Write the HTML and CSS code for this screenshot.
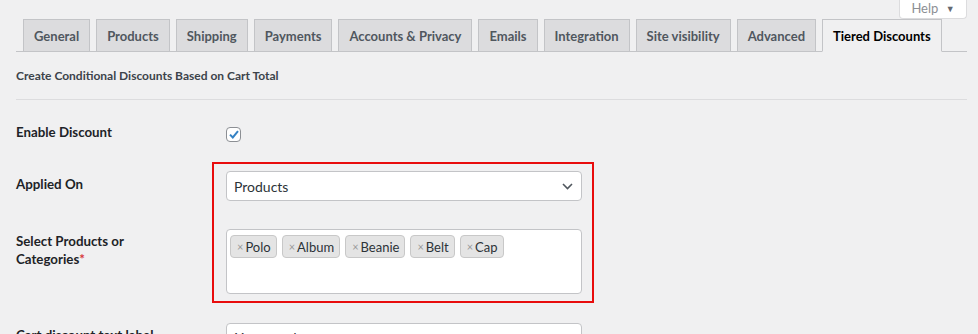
FILE: index.html
```html
<!DOCTYPE html>
<html lang="en">
<head>
<meta charset="utf-8">
<title>Tiered Discounts</title>
<link rel="stylesheet" href="styles.css">
</head>
<body>
<div class="help-bar">
  <button class="help-btn" type="button">Help <span class="help-arrow">&#9660;</span></button>
</div>
<div class="wrap">
  <nav class="tabs">
    <a class="tab">General</a>
    <a class="tab">Products</a>
    <a class="tab">Shipping</a>
    <a class="tab">Payments</a>
    <a class="tab">Accounts &amp; Privacy</a>
    <a class="tab">Emails</a>
    <a class="tab">Integration</a>
    <a class="tab">Site visibility</a>
    <a class="tab">Advanced</a>
    <a class="tab tab-active">Tiered Discounts</a>
  </nav>
  <h2 class="section-title">Create Conditional Discounts Based on Cart Total</h2>
  <hr class="divider">
  <div class="form">
    <div class="row row-enable">
      <div class="label">Enable Discount</div>
      <div class="field"><span class="checkbox"><svg width="10" height="9" viewBox="0 0 10 9"><path d="M1 4.6 L3.8 7.4 L9 1.2" fill="none" stroke="#3582c4" stroke-width="2"/></svg></span></div>
    </div>
    <div class="highlight">
      <div class="row row-applied">
        <div class="label label-applied">Applied On</div>
        <div class="field">
          <div class="select">
            <span>Products</span>
            <svg class="chevron" width="11" height="7" viewBox="0 0 11 7"><path d="M1 1 L5.5 5.5 L10 1" fill="none" stroke="#50575e" stroke-width="1.6"/></svg>
          </div>
        </div>
      </div>
      <div class="row row-select">
        <div class="label label-select">Select Products or Categories<span class="req">*</span></div>
        <div class="field">
          <div class="multi">
            <span class="tag"><span class="x">×</span>Polo</span>
            <span class="tag"><span class="x">×</span>Album</span>
            <span class="tag"><span class="x">×</span>Beanie</span>
            <span class="tag"><span class="x">×</span>Belt</span>
            <span class="tag"><span class="x">×</span>Cap</span>
          </div>
        </div>
      </div>
    </div>
    <div class="row row-text">
      <div class="label label-text">Cart discount text label</div>
      <div class="field"><div class="input">You saved</div></div>
    </div>
  </div>
</div>
</body>
</html>
```
FILE: styles.css
```css
html, body {
  margin: 0;
  padding: 0;
  background: #f0f0f1;
  height: 334px;
  overflow: hidden;
}
body {
  font-family: "Lato", "Open Sans", sans-serif;
  color: #1d2327;
}
.help-bar {
  display: flex;
  justify-content: flex-end;
  padding-right: 11px;
  height: 19px;
}
.help-btn {
  width: 68px;
  height: 19px;
  margin: 0;
  padding: 0 0 2px;
  background: #fff;
  border: 1px solid #dcdcde;
  border-top: none;
  border-radius: 0 0 4px 4px;
  font-family: inherit;
  font-size: 13px;
  color: #8c8f94;
}
.help-arrow {
  font-size: 9px;
  margin-left: 4px;
  color: #646970;
  vertical-align: 1px;
}
.wrap {
  padding: 0 11px 0 16px;
}
.tabs {
  display: flex;
  gap: 6px;
  padding-left: 7px;
  border-bottom: 1px solid #c3c4c7;
  height: 32px;
}
.tab {
  box-sizing: border-box;
  height: 33px;
  padding: 0 10px;
  display: flex;
  align-items: center;
  background: #dcdcde;
  border: 1px solid #c3c4c7;
  font-size: 13px;
  font-weight: 700;
  color: #50575e;
  white-space: nowrap;
}
.tab-active {
  background: #f0f0f1;
  border-bottom-color: #f0f0f1;
  color: #000;
}
.section-title {
  margin: 16px 0 0;
  font-size: 12px;
  line-height: 16px;
  font-weight: 700;
  color: #3c434a;
}
.divider {
  margin: 15px 0 0;
  border: 0;
  border-top: 1px solid #dcdcde;
  height: 0;
}
.form {
  display: flex;
  flex-direction: column;
}
.row {
  display: grid;
  grid-template-columns: 200px 356px;
  column-gap: 10px;
  align-items: start;
}
.label {
  font-size: 13.3px;
  font-weight: 700;
  line-height: 18px;
  color: #1d2327;
}
.row-enable {
  padding: 23px 0 14px;
}
.row-enable .field {
  padding-top: 4px;
}
.checkbox {
  box-sizing: border-box;
  width: 15px;
  height: 15px;
  display: flex;
  align-items: center;
  justify-content: center;
  background: #fff;
  border: 1px solid #8c8f94;
  border-radius: 4px;
}
.highlight {
  position: relative;
}
.highlight::after {
  content: "";
  position: absolute;
  left: 196px;
  top: 6px;
  width: 378px;
  height: 137px;
  border: 2px solid #e80d0d;
  pointer-events: none;
}
.row-applied {
  padding: 15px 0;
}
.label-applied {
  padding-top: 4px;
}
.select {
  box-sizing: border-box;
  height: 30px;
  display: flex;
  align-items: center;
  justify-content: space-between;
  padding: 0 7px 0 7px;
  background: #fff;
  border: 1px solid #c3c4c7;
  border-radius: 4px;
  font-size: 14px;
  color: #2c3338;
}
.chevron {
  margin-right: 1px;
}
.row-select {
  padding: 13px 0 15px;
}
.label-select {
  padding-top: 3px;
  width: 150px;
}
.req {
  color: #d63638;
}
.multi {
  box-sizing: border-box;
  height: 65px;
  padding: 5px 3px;
  display: flex;
  flex-wrap: wrap;
  align-content: flex-start;
  gap: 5px;
  background: #fff;
  border: 1px solid #c3c4c7;
  border-radius: 4px;
}
.tag {
  box-sizing: border-box;
  height: 23px;
  display: inline-flex;
  align-items: center;
  padding: 0 5px 0 6px;
  background: #e4e4e4;
  border: 1px solid #c8c8c8;
  border-radius: 4px;
  font-size: 13px;
  color: #2c3338;
}
.x {
  color: #999;
  font-size: 11px;
  margin-right: 2px;
}
.row-text {
  padding: 14px 0 0;
}
.label-text {
  padding-top: 3px;
}
.input {
  box-sizing: border-box;
  height: 30px;
  padding: 5px 8px;
  background: #fff;
  border: 1px solid #c3c4c7;
  border-radius: 4px;
  font-size: 14px;
  color: #2c3338;
}
```
